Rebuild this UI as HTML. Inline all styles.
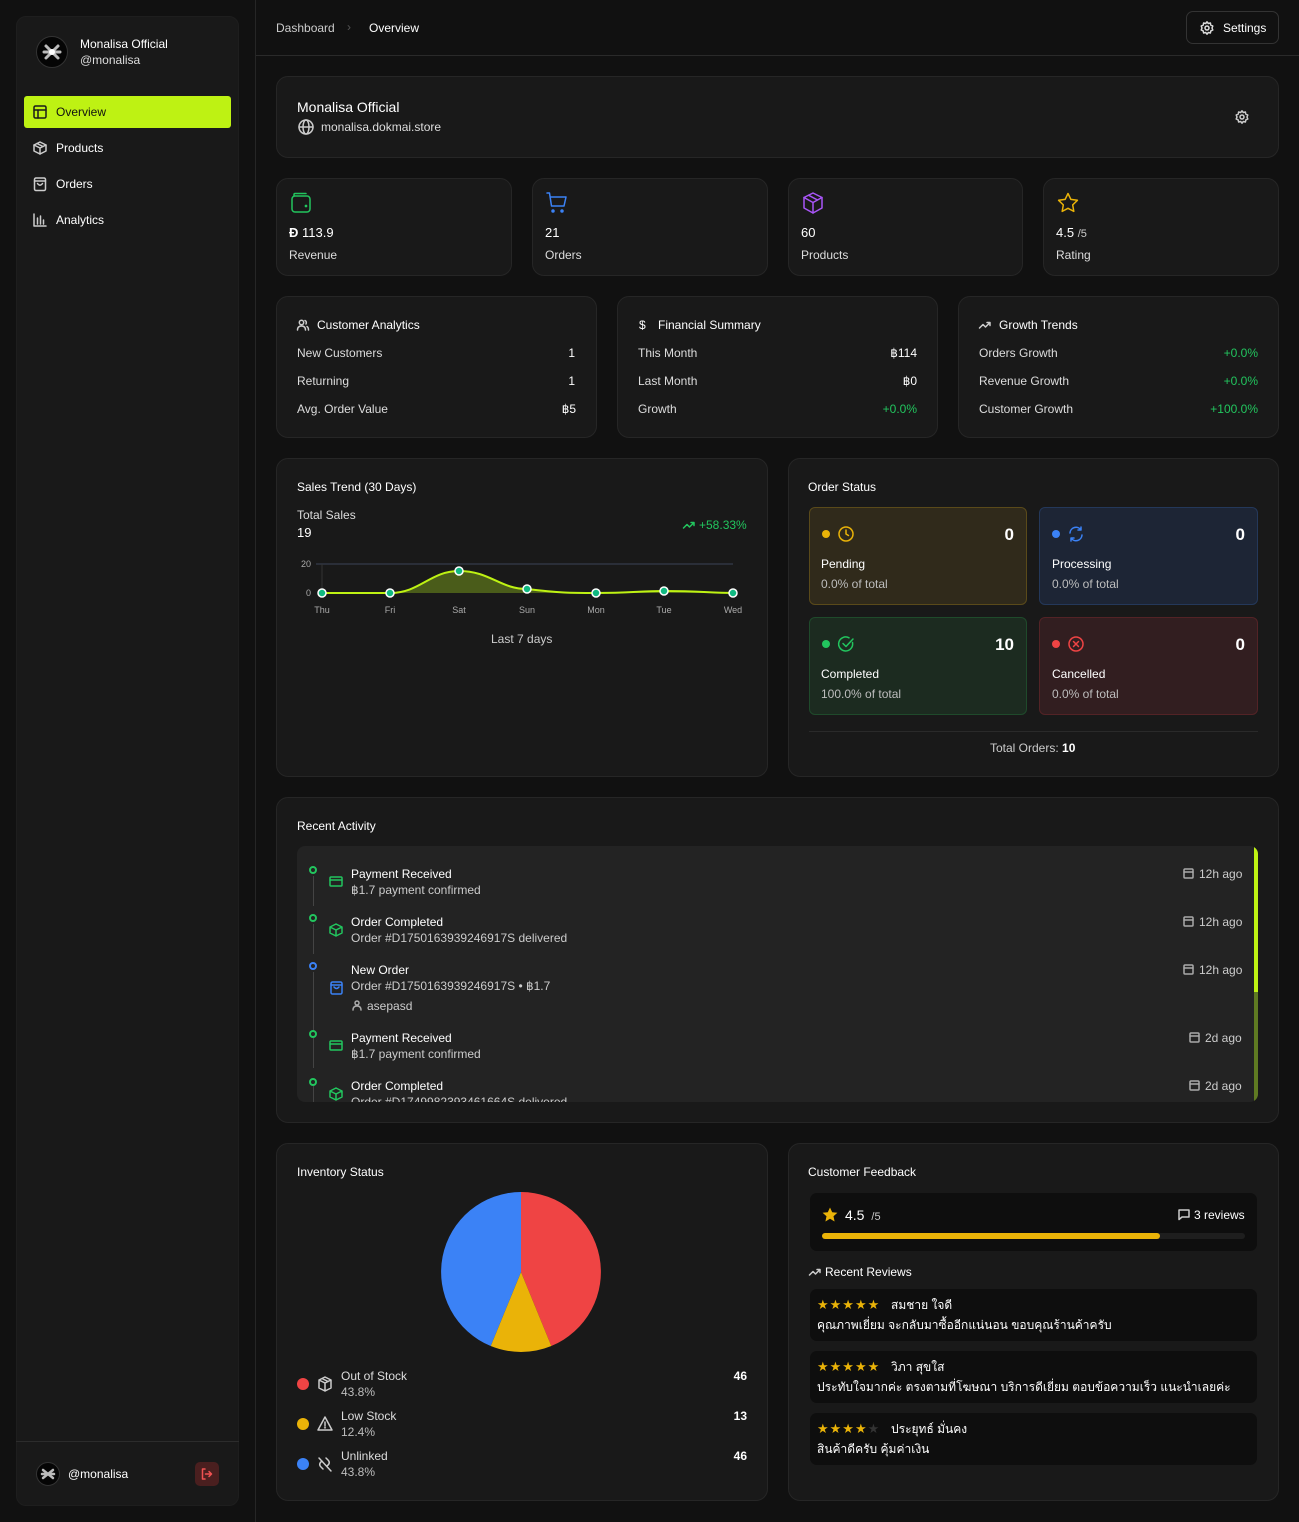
<!DOCTYPE html>
<html><head><meta charset="utf-8"><style>
*{box-sizing:border-box;margin:0;padding:0}
body{width:1299px;height:1522px;background:#111111;font-family:"Liberation Sans",sans-serif;color:#e5e5e5;position:relative;overflow:hidden;font-size:12px}
.c{position:absolute;background:#191919;border:1px solid #262626;border-radius:12px}
.t{position:absolute;line-height:16px;white-space:nowrap}
.w{color:#fff}
.g{color:#22c55e}
.m{color:#bdbdbd}
.r{text-align:right}
svg{position:absolute;overflow:visible}
.ic{fill:none;stroke-width:1.5;stroke-linecap:round;stroke-linejoin:round}
.st{font-size:13px;letter-spacing:1px}
</style></head><body>

<!-- sidebar -->
<div class="c" style="left:16px;top:16px;width:223px;height:1490px;border-radius:10px;border-color:#1e1e1e"></div>
<div style="position:absolute;left:36px;top:36px;width:32px;height:32px;border-radius:50%;background:#050505;border:1px solid #333"></div>
<svg style="left:36px;top:36px" width="32" height="32"><g stroke="#bbb" stroke-width="3" stroke-linecap="round"><line x1="10" y1="10" x2="22" y2="22"/><line x1="22" y1="10" x2="10" y2="22"/><line x1="8" y1="16" x2="24" y2="16"/></g><circle cx="16" cy="16" r="3" fill="#fff"/></svg>
<div class="t w" style="left:80px;top:36px">Monalisa Official</div>
<div class="t m" style="left:80px;top:52px;color:#ddd">@monalisa</div>

<div style="position:absolute;left:24px;top:96px;width:207px;height:32px;background:#bef213;border-radius:3px"></div>
<svg style="left:33px;top:105px" width="14" height="14"><g class="ic" stroke="#1a1a1a"><rect x="1" y="1" width="12" height="12" rx="1.5"/><line x1="1" y1="5" x2="13" y2="5"/><line x1="5" y1="5" x2="5" y2="13"/></g></svg>
<div class="t" style="left:56px;top:104px;color:#111">Overview</div>

<svg style="left:33px;top:141px" width="14" height="14"><g class="ic" stroke="#ccc" stroke-width="1.2"><path d="M7 1 L13 4 L13 10 L7 13 L1 10 L1 4 Z"/><path d="M1 4 L7 7 L13 4 M7 7 L7 13 M4 2.5 L10 5.5"/></g></svg>
<div class="t w" style="left:56px;top:140px">Products</div>
<svg style="left:33px;top:177px" width="14" height="14"><g class="ic" stroke="#ccc" stroke-width="1.2"><rect x="1.5" y="1" width="11" height="12.5" rx="1.5"/><line x1="1.5" y1="4" x2="12.5" y2="4"/><path d="M4.5 6.5 Q7 10 9.5 6.5"/></g></svg>
<div class="t w" style="left:56px;top:176px">Orders</div>
<svg style="left:33px;top:213px" width="14" height="14"><g class="ic" stroke="#ccc" stroke-width="1.2"><path d="M1 1 V13 H13"/><line x1="4.5" y1="5" x2="4.5" y2="11"/><line x1="7.5" y1="3" x2="7.5" y2="11"/><line x1="10.5" y1="7" x2="10.5" y2="11"/></g></svg>
<div class="t w" style="left:56px;top:212px">Analytics</div>

<div style="position:absolute;left:16px;top:1441px;width:223px;height:1px;background:#2c2c2c"></div>
<div style="position:absolute;left:36px;top:1462px;width:24px;height:24px;border-radius:50%;background:#050505;border:1px solid #333"></div>
<svg style="left:36px;top:1462px" width="24" height="24"><g stroke="#bbb" stroke-width="2.5" stroke-linecap="round"><line x1="7" y1="8" x2="17" y2="16"/><line x1="17" y1="8" x2="7" y2="16"/><line x1="6" y1="12" x2="18" y2="12"/></g></svg>
<div class="t w" style="left:68px;top:1466px">@monalisa</div>
<div style="position:absolute;left:195px;top:1462px;width:24px;height:24px;border-radius:5px;background:#4a1f1f"></div>
<svg style="left:201px;top:1468px" width="12" height="12"><g class="ic" stroke="#f05252" stroke-width="1.2"><path d="M4 1 H1.5 V11 H4"/><path d="M4.5 6 H10.5 M8 3.5 L10.5 6 L8 8.5"/></g></svg>

<!-- top bar -->
<div style="position:absolute;left:255px;top:0;width:1px;height:1522px;background:#262626"></div>
<div style="position:absolute;left:256px;top:55px;width:1043px;height:1px;background:#2a2a2a"></div>
<div class="t m" style="left:276px;top:20px;color:#ccc">Dashboard</div>
<div class="t" style="left:347px;top:19px;color:#555">›</div>
<div class="t w" style="left:369px;top:20px">Overview</div>
<div style="position:absolute;left:1186px;top:11px;width:93px;height:33px;border:1px solid #333;border-radius:7px"></div>
<svg style="left:1200px;top:21px" width="14" height="14"><g class="ic" stroke="#ddd" stroke-width="1.2"><path d="M7 0.8 L8.3 2.5 L10.4 2 L10.8 4.1 L12.8 5 L12 7 L12.8 9 L10.8 9.9 L10.4 12 L8.3 11.5 L7 13.2 L5.7 11.5 L3.6 12 L3.2 9.9 L1.2 9 L2 7 L1.2 5 L3.2 4.1 L3.6 2 L5.7 2.5 Z"/><circle cx="7" cy="7" r="2"/></g></svg>
<div class="t w" style="left:1223px;top:20px">Settings</div>

<!-- store card -->
<div class="c" style="left:276px;top:76px;width:1003px;height:82px"></div>
<div class="t w" style="left:297px;top:99px;font-size:14px">Monalisa Official</div>
<svg style="left:298px;top:119px" width="16" height="16"><g class="ic" stroke="#ccc" stroke-width="1.3"><circle cx="8" cy="8" r="7"/><ellipse cx="8" cy="8" rx="3" ry="7"/><line x1="1" y1="8" x2="15" y2="8"/></g></svg>
<div class="t" style="left:321px;top:119px;color:#ddd">monalisa.dokmai.store</div>
<svg style="left:1235px;top:110px" width="14" height="14"><g class="ic" stroke="#ccc" stroke-width="1.2"><path d="M7 0.8 L8.3 2.5 L10.4 2 L10.8 4.1 L12.8 5 L12 7 L12.8 9 L10.8 9.9 L10.4 12 L8.3 11.5 L7 13.2 L5.7 11.5 L3.6 12 L3.2 9.9 L1.2 9 L2 7 L1.2 5 L3.2 4.1 L3.6 2 L5.7 2.5 Z"/><circle cx="7" cy="7" r="2"/></g></svg>

<!-- stat cards -->
<div class="c" style="left:276px;top:178px;width:236px;height:98px"></div>
<div class="c" style="left:532px;top:178px;width:236px;height:98px"></div>
<div class="c" style="left:788px;top:178px;width:235px;height:98px"></div>
<div class="c" style="left:1043px;top:178px;width:236px;height:98px"></div>
<svg style="left:290px;top:192px" width="22" height="22"><g class="ic" stroke="#22c55e" stroke-width="1.8"><rect x="2" y="4" width="18" height="16" rx="3"/><path d="M4 4 V2.5 Q4 1.5 5 1.5 H16"/><circle cx="16" cy="14" r="0.6" fill="#22c55e"/></g></svg>
<div class="t w" style="left:289px;top:225px;font-size:13px;font-weight:bold">Đ <span style="font-weight:normal">113.9</span></div>
<div class="t" style="left:289px;top:247px;color:#ddd">Revenue</div>
<svg style="left:546px;top:192px" width="22" height="22"><g class="ic" stroke="#3b82f6" stroke-width="1.8"><path d="M1 1 H3.5 L5.5 14 H18 L20 5 H4.5"/><circle cx="7" cy="19" r="1" fill="#3b82f6"/><circle cx="16" cy="19" r="1" fill="#3b82f6"/></g></svg>
<div class="t w" style="left:545px;top:225px;font-size:13px">21</div>
<div class="t" style="left:545px;top:247px;color:#ddd">Orders</div>
<svg style="left:802px;top:192px" width="22" height="22"><g class="ic" stroke="#a855f7" stroke-width="1.8"><path d="M11 1 L20 5.5 L20 16 L11 21 L2 16 L2 5.5 Z"/><path d="M2 5.5 L11 10.5 L20 5.5 M11 10.5 V21 M6.5 3.2 L15.5 8"/></g></svg>
<div class="t w" style="left:801px;top:225px;font-size:13px">60</div>
<div class="t" style="left:801px;top:247px;color:#ddd">Products</div>
<svg style="left:1057px;top:192px" width="22" height="22"><path class="ic" stroke="#eab308" stroke-width="1.8" d="M11 1.5 L13.9 7.4 L20.4 8.3 L15.7 12.9 L16.8 19.4 L11 16.3 L5.2 19.4 L6.3 12.9 L1.6 8.3 L8.1 7.4 Z"/></svg>
<div class="t w" style="left:1056px;top:225px;font-size:13px">4.5 <span style="font-size:11px;color:#ccc">/5</span></div>
<div class="t" style="left:1056px;top:247px;color:#ddd">Rating</div>

<!-- analytics cards -->
<div class="c" style="left:276px;top:296px;width:321px;height:142px"></div>
<div class="c" style="left:617px;top:296px;width:321px;height:142px"></div>
<div class="c" style="left:958px;top:296px;width:321px;height:142px"></div>

<svg style="left:297px;top:319px" width="12" height="12"><g class="ic" stroke="#ccc" stroke-width="1"><circle cx="4.5" cy="3.5" r="2.2"/><path d="M0.5 11 Q0.5 7 4.5 7 Q8.5 7 8.5 11"/><path d="M8 1.5 Q10 2.5 9 5 M10 7.5 Q11.5 8.5 11.5 11"/></g></svg>
<div class="t w" style="left:317px;top:317px">Customer Analytics</div>
<div class="t" style="left:297px;top:345px;color:#ddd">New Customers</div><div class="t w r" style="right:724px;top:345px">1</div>
<div class="t" style="left:297px;top:373px;color:#ddd">Returning</div><div class="t w r" style="right:724px;top:373px">1</div>
<div class="t" style="left:297px;top:401px;color:#ddd">Avg. Order Value</div><div class="t w r" style="right:723px;top:401px">฿5</div>

<div class="t w" style="left:639px;top:317px">$</div>
<div class="t w" style="left:658px;top:317px">Financial Summary</div>
<div class="t" style="left:638px;top:345px;color:#ddd">This Month</div><div class="t w r" style="right:382px;top:345px">฿114</div>
<div class="t" style="left:638px;top:373px;color:#ddd">Last Month</div><div class="t w r" style="right:382px;top:373px">฿0</div>
<div class="t" style="left:638px;top:401px;color:#ddd">Growth</div><div class="t g r" style="right:382px;top:401px">+0.0%</div>

<svg style="left:979px;top:320px" width="12" height="10"><path class="ic" stroke="#ccc" stroke-width="1" d="M0.5 8 L4 4.5 L6.5 7 L11 2.5 M8 2.5 H11 V5.5"/></svg>
<div class="t w" style="left:999px;top:317px">Growth Trends</div>
<div class="t" style="left:979px;top:345px;color:#ddd">Orders Growth</div><div class="t g r" style="right:41px;top:345px">+0.0%</div>
<div class="t" style="left:979px;top:373px;color:#ddd">Revenue Growth</div><div class="t g r" style="right:41px;top:373px">+0.0%</div>
<div class="t" style="left:979px;top:401px;color:#ddd">Customer Growth</div><div class="t g r" style="right:41px;top:401px">+100.0%</div>

<!-- sales trend -->
<div class="c" style="left:276px;top:458px;width:492px;height:319px"></div>
<div class="t w" style="left:297px;top:479px">Sales Trend (30 Days)</div>
<div class="t" style="left:297px;top:507px;color:#ddd">Total Sales</div>
<div class="t w" style="left:297px;top:525px;font-size:13px">19</div>
<svg style="left:683px;top:520px" width="12" height="10"><path class="ic" stroke="#22c55e" stroke-width="1" d="M0.5 8 L4 4.5 L6.5 7 L11 2.5 M8 2.5 H11 V5.5"/></svg>
<div class="t g" style="left:699px;top:517px">+58.33%</div>
<svg style="left:0;top:0" width="1299" height="700">
<line x1="316" y1="564" x2="733" y2="564" stroke="#3a4456" stroke-width="1"/>
<line x1="322" y1="564" x2="322" y2="593" stroke="#333" stroke-width="1"/>
<text x="311" y="567" fill="#aaa" font-size="9" text-anchor="end" font-family="Liberation Sans">20</text>
<text x="311" y="596" fill="#aaa" font-size="9" text-anchor="end" font-family="Liberation Sans">0</text>
<path d="M322 593 L390 593 C420 593 430 571 459 571 C490 571 500 589 527 589 C560 593 570 593 596 593 C630 593 640 591 664 591 C700 591 710 593 733 593 L733 593 L322 593 Z" fill="#4a5c1a"/>
<path d="M322 593 L390 593 C420 593 430 571 459 571 C490 571 500 589 527 589 C560 593 570 593 596 593 C630 593 640 591 664 591 C700 591 710 593 733 593" fill="none" stroke="#bef213" stroke-width="2"/>
<g fill="#10b981" stroke="#fff" stroke-width="1.5">
<circle cx="322" cy="593" r="4"/><circle cx="390" cy="593" r="4"/><circle cx="459" cy="571" r="4"/><circle cx="527" cy="589" r="4"/><circle cx="596" cy="593" r="4"/><circle cx="664" cy="591" r="4"/><circle cx="733" cy="593" r="4"/></g>
<g fill="#aaa" font-size="9" text-anchor="middle" font-family="Liberation Sans">
<text x="322" y="613">Thu</text><text x="390" y="613">Fri</text><text x="459" y="613">Sat</text><text x="527" y="613">Sun</text><text x="596" y="613">Mon</text><text x="664" y="613">Tue</text><text x="733" y="613">Wed</text></g>
</svg>
<div class="t" style="left:491px;top:631px;color:#ccc">Last 7 days</div>

<!-- order status -->
<div class="c" style="left:788px;top:458px;width:491px;height:319px"></div>
<div class="t w" style="left:808px;top:479px">Order Status</div>
<div style="position:absolute;left:809px;top:507px;width:218px;height:98px;background:#302a1b;border:1px solid #5a4a1a;border-radius:6px"></div>
<div style="position:absolute;left:1039px;top:507px;width:219px;height:98px;background:#1d2535;border:1px solid #24385a;border-radius:6px"></div>
<div style="position:absolute;left:809px;top:617px;width:218px;height:98px;background:#1c2b20;border:1px solid #1f4a2b;border-radius:6px"></div>
<div style="position:absolute;left:1039px;top:617px;width:219px;height:98px;background:#321e20;border:1px solid #532326;border-radius:6px"></div>
<div style="position:absolute;left:822px;top:530px;width:8px;height:8px;border-radius:50%;background:#eab308"></div>
<div style="position:absolute;left:1052px;top:530px;width:8px;height:8px;border-radius:50%;background:#3b82f6"></div>
<div style="position:absolute;left:822px;top:640px;width:8px;height:8px;border-radius:50%;background:#22c55e"></div>
<div style="position:absolute;left:1052px;top:640px;width:8px;height:8px;border-radius:50%;background:#ef4444"></div>
<svg style="left:838px;top:526px" width="16" height="16"><g class="ic" stroke="#eab308" stroke-width="1.4"><circle cx="8" cy="8" r="7"/><path d="M8 4 V8 L10.5 9.5"/></g></svg>
<svg style="left:1068px;top:526px" width="16" height="16"><g class="ic" stroke="#3b82f6" stroke-width="1.4"><path d="M2 7 A6 6 0 0 1 13 4 M13 1 V4 H10"/><path d="M14 9 A6 6 0 0 1 3 12 M3 15 V12 H6"/></g></svg>
<svg style="left:838px;top:636px" width="16" height="16"><g class="ic" stroke="#22c55e" stroke-width="1.4"><path d="M14.5 6.5 A7 7 0 1 1 11 1.8"/><path d="M5 7.5 L8 10.5 L15 3"/></g></svg>
<svg style="left:1068px;top:636px" width="16" height="16"><g class="ic" stroke="#ef4444" stroke-width="1.4"><circle cx="8" cy="8" r="7"/><path d="M5.5 5.5 L10.5 10.5 M10.5 5.5 L5.5 10.5"/></g></svg>
<div class="t w r" style="right:285px;top:525px;font-size:17px;font-weight:bold;line-height:20px">0</div>
<div class="t w r" style="right:54px;top:525px;font-size:17px;font-weight:bold;line-height:20px">0</div>
<div class="t w r" style="right:285px;top:635px;font-size:17px;font-weight:bold;line-height:20px">10</div>
<div class="t w r" style="right:54px;top:635px;font-size:17px;font-weight:bold;line-height:20px">0</div>
<div class="t w" style="left:821px;top:556px">Pending</div><div class="t m" style="left:821px;top:576px">0.0% of total</div>
<div class="t w" style="left:1052px;top:556px">Processing</div><div class="t m" style="left:1052px;top:576px">0.0% of total</div>
<div class="t w" style="left:821px;top:666px">Completed</div><div class="t m" style="left:821px;top:686px">100.0% of total</div>
<div class="t w" style="left:1052px;top:666px">Cancelled</div><div class="t m" style="left:1052px;top:686px">0.0% of total</div>
<div style="position:absolute;left:809px;top:731px;width:449px;height:1px;background:#2a2a2a"></div>
<div class="t" style="left:990px;top:740px;color:#ccc">Total Orders: <b class="w">10</b></div>

<!-- recent activity -->
<div class="c" style="left:276px;top:797px;width:1003px;height:326px"></div>
<div class="t w" style="left:297px;top:818px">Recent Activity</div>
<div style="position:absolute;left:297px;top:846px;width:961px;height:256px;background:#232323;border-radius:8px;overflow:hidden">
 <div style="position:absolute;left:957px;top:0;width:4px;height:146px;background:#bef213"></div>
 <div style="position:absolute;left:957px;top:146px;width:4px;height:110px;background:#5f7a22"></div>
 <div style="position:absolute;left:16px;top:30px;width:1px;height:30px;background:#444"></div>
 <div style="position:absolute;left:16px;top:78px;width:1px;height:30px;background:#444"></div>
 <div style="position:absolute;left:16px;top:126px;width:1px;height:60px;background:#444"></div>
 <div style="position:absolute;left:16px;top:192px;width:1px;height:30px;background:#444"></div>
 <div style="position:absolute;left:16px;top:240px;width:1px;height:20px;background:#444"></div>
 <div class="t" style="left:54px;top:248px;color:#ccc">Order #D1749982393461664S delivered</div>
</div>
<svg style="left:0;top:0" width="1299" height="1110">
<g fill="none" stroke-width="2"><circle cx="313" cy="870" r="3" stroke="#22c55e"/><circle cx="313" cy="918" r="3" stroke="#22c55e"/><circle cx="313" cy="966" r="3" stroke="#3b82f6"/><circle cx="313" cy="1034" r="3" stroke="#22c55e"/><circle cx="313" cy="1082" r="3" stroke="#22c55e"/></g>
<g class="ic" stroke="#22c55e" stroke-width="1.3"><rect x="330" y="877" width="12" height="9" rx="1"/><line x1="330" y1="880" x2="342" y2="880"/>
<rect x="330" y="1041" width="12" height="9" rx="1"/><line x1="330" y1="1044" x2="342" y2="1044"/>
<path d="M336 924 L342 927 L342 933 L336 936 L330 933 L330 927 Z M330 927 L336 930 L342 927 M336 930 V936"/>
<path d="M336 1088 L342 1091 L342 1097 L336 1100 L330 1097 L330 1091 Z M330 1091 L336 1094 L342 1091 M336 1094 V1100"/></g>
<g class="ic" stroke="#3b82f6" stroke-width="1.3"><rect x="331" y="982" width="11" height="12" rx="1.5"/><line x1="331" y1="985" x2="342" y2="985"/><path d="M334 987 Q336.5 990 339 987"/></g>
<g class="ic" stroke="#aaa" stroke-width="1"><circle cx="357" cy="1003" r="2"/><path d="M353 1010 Q353 1006 357 1006 Q361 1006 361 1010"/></g>
<g class="ic" stroke="#aaa" stroke-width="1"><rect x="1184" y="869" width="9" height="9" rx="1"/><line x1="1184" y1="872" x2="1193" y2="872"/>
<rect x="1184" y="917" width="9" height="9" rx="1"/><line x1="1184" y1="920" x2="1193" y2="920"/>
<rect x="1184" y="965" width="9" height="9" rx="1"/><line x1="1184" y1="968" x2="1193" y2="968"/>
<rect x="1190" y="1033" width="9" height="9" rx="1"/><line x1="1190" y1="1036" x2="1199" y2="1036"/>
<rect x="1190" y="1081" width="9" height="9" rx="1"/><line x1="1190" y1="1084" x2="1199" y2="1084"/></g>
</svg>
<div class="t w" style="left:351px;top:866px">Payment Received</div><div class="t" style="left:351px;top:882px;color:#ccc">฿1.7 payment confirmed</div>
<div class="t w" style="left:351px;top:914px">Order Completed</div><div class="t" style="left:351px;top:930px;color:#ccc">Order #D1750163939246917S delivered</div>
<div class="t w" style="left:351px;top:962px">New Order</div><div class="t" style="left:351px;top:978px;color:#ccc">Order #D1750163939246917S • ฿1.7</div>
<div class="t" style="left:367px;top:998px;color:#ccc">asepasd</div>
<div class="t w" style="left:351px;top:1030px">Payment Received</div><div class="t" style="left:351px;top:1046px;color:#ccc">฿1.7 payment confirmed</div>
<div class="t w" style="left:351px;top:1078px">Order Completed</div>
<div class="t" style="left:1199px;top:866px;color:#ccc">12h ago</div>
<div class="t" style="left:1199px;top:914px;color:#ccc">12h ago</div>
<div class="t" style="left:1199px;top:962px;color:#ccc">12h ago</div>
<div class="t" style="left:1205px;top:1030px;color:#ccc">2d ago</div>
<div class="t" style="left:1205px;top:1078px;color:#ccc">2d ago</div>

<!-- inventory -->
<div class="c" style="left:276px;top:1143px;width:492px;height:358px"></div>
<div class="t w" style="left:297px;top:1164px">Inventory Status</div>
<svg style="left:0;top:0" width="1299" height="1522">
<path d="M521 1272 L521 1192 A80 80 0 0 1 551.3 1346 Z" fill="#ef4444"/>
<path d="M521 1272 L551.3 1346 A80 80 0 0 1 490.7 1346 Z" fill="#eab308"/>
<path d="M521 1272 L490.7 1346 A80 80 0 0 1 521 1192 Z" fill="#3b82f6"/>
<circle cx="303" cy="1384" r="6" fill="#ef4444"/><circle cx="303" cy="1424" r="6" fill="#eab308"/><circle cx="303" cy="1464" r="6" fill="#3b82f6"/>
<g class="ic" stroke="#ccc" stroke-width="1.2">
<path d="M325 1377 L331 1380 L331 1388 L325 1391 L319 1388 L319 1380 Z M319 1380 L325 1383 L331 1380 M325 1383 V1391 M322 1378.5 L328 1381.5"/>
<path d="M325 1417 L332 1430 H318 Z M325 1422 V1425.5"/><circle cx="325" cy="1427.5" r="0.4"/>
<path d="M319 1458 L331 1471 M322 1461 Q318 1464 321 1467 L323 1469 M327 1466 Q331 1463 328 1460 L326 1458"/>
</g></svg>
<div class="t" style="left:341px;top:1368px;color:#ddd">Out of Stock</div><div class="t m" style="left:341px;top:1384px">43.8%</div><div class="t w r" style="right:552px;top:1368px;font-weight:bold">46</div>
<div class="t" style="left:341px;top:1408px;color:#ddd">Low Stock</div><div class="t m" style="left:341px;top:1424px">12.4%</div><div class="t w r" style="right:552px;top:1408px;font-weight:bold">13</div>
<div class="t" style="left:341px;top:1448px;color:#ddd">Unlinked</div><div class="t m" style="left:341px;top:1464px">43.8%</div><div class="t w r" style="right:552px;top:1448px;font-weight:bold">46</div>

<!-- feedback -->
<div class="c" style="left:788px;top:1143px;width:491px;height:358px"></div>
<div class="t w" style="left:808px;top:1164px">Customer Feedback</div>
<div style="position:absolute;left:810px;top:1193px;width:447px;height:58px;background:#0e0e0e;border-radius:7px"></div>
<svg style="left:822px;top:1207px" width="16" height="16"><path fill="#eab308" d="M8 0.5 L10.2 5.2 L15.4 5.8 L11.5 9.3 L12.6 14.5 L8 11.8 L3.4 14.5 L4.5 9.3 L0.6 5.8 L5.8 5.2 Z"/></svg>
<div class="t w" style="left:845px;top:1207px;font-size:14px">4.5 <span style="font-size:11px;color:#ccc">&nbsp;/5</span></div>
<svg style="left:1178px;top:1209px" width="12" height="12"><path class="ic" stroke="#ccc" stroke-width="1" d="M1 1 H11 V8 H4 L1 10.5 Z"/></svg>
<div class="t w" style="left:1194px;top:1207px">3 reviews</div>
<div style="position:absolute;left:822px;top:1233px;width:423px;height:6px;background:#1e1e1e;border-radius:3px"></div>
<div style="position:absolute;left:822px;top:1233px;width:338px;height:6px;background:#eab308;border-radius:3px"></div>
<svg style="left:809px;top:1267px" width="12" height="10"><path class="ic" stroke="#ccc" stroke-width="1" d="M0.5 8 L4 4.5 L6.5 7 L11 2.5 M8 2.5 H11 V5.5"/></svg>
<div class="t w" style="left:825px;top:1264px">Recent Reviews</div>
<div style="position:absolute;left:810px;top:1289px;width:447px;height:52px;background:#0e0e0e;border-radius:7px"></div>
<div style="position:absolute;left:810px;top:1351px;width:447px;height:52px;background:#0e0e0e;border-radius:7px"></div>
<div style="position:absolute;left:810px;top:1413px;width:447px;height:52px;background:#0e0e0e;border-radius:7px"></div>
<div class="t st" style="left:817px;top:1297px;color:#eab308">★★★★★</div>
<div class="t w" style="left:891px;top:1297px">สมชาย ใจดี</div>
<div class="t w" style="left:817px;top:1317px">คุณภาพเยี่ยม จะกลับมาซื้ออีกแน่นอน ขอบคุณร้านค้าครับ</div>
<div class="t st" style="left:817px;top:1359px;color:#eab308">★★★★★</div>
<div class="t w" style="left:891px;top:1359px">วิภา สุขใส</div>
<div class="t w" style="left:817px;top:1379px">ประทับใจมากค่ะ ตรงตามที่โฆษณา บริการดีเยี่ยม ตอบข้อความเร็ว แนะนำเลยค่ะ</div>
<div class="t st" style="left:817px;top:1421px;color:#eab308">★★★★<span style="color:#333">★</span></div>
<div class="t w" style="left:891px;top:1421px">ประยุทธ์ มั่นคง</div>
<div class="t w" style="left:817px;top:1441px">สินค้าดีครับ คุ้มค่าเงิน</div>

</body></html>
